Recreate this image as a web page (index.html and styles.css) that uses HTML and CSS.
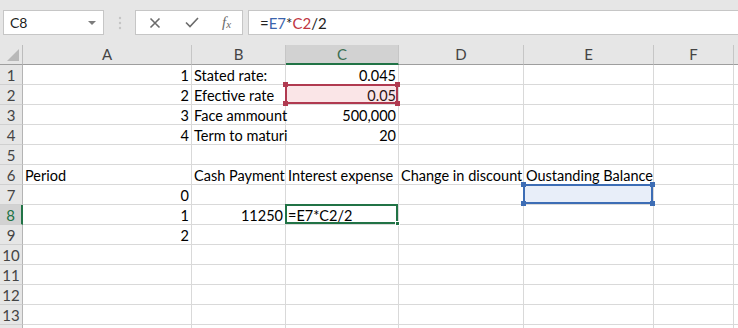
FILE: index.html
```html
<!DOCTYPE html>
<html lang="en">
<head>
  <meta charset="UTF-8" />
  <title>Book1 - Excel</title>
  <link rel="stylesheet" href="styles.css">
</head>
<body>
  <div class="toolbar">
    <div class="name-box"><span>C8</span><span class="caret"></span></div>
    <div class="grip">
      <svg width="4" height="14" viewBox="0 0 4 14"><circle cx="2" cy="2" r="1.2"/><circle cx="2" cy="7" r="1.2"/><circle cx="2" cy="12" r="1.2"/></svg>
    </div>
    <div class="fx-buttons">
      <svg class="btn-cancel" width="12" height="12" viewBox="0 0 12 12"><path d="M1.5 1.5 L10.5 10.5 M10.5 1.5 L1.5 10.5"/></svg>
      <svg class="btn-enter" width="14" height="11" viewBox="0 0 14 11"><path d="M1 5.5 L5 9.5 L13 1"/></svg>
      <span class="fx">f<sub>x</sub></span>
    </div>
    <div class="formula">=<span class="ref-blue">E7</span>*<span class="ref-red">C2</span>/2</div>
  </div>

  <div class="sheet" id="sheet"></div>

<script>
const cols = ["A", "B", "C", "D", "E", "F", ""];

// cell contents: [text, "num" for right aligned]
const data = {
  1: { A: ["1", "num"], B: ["Stated rate:"], C: ["0.045", "num"] },
  2: { A: ["2", "num"], B: ["Efective rate"], C: ["0.05", "num"] },
  3: { A: ["3", "num"], B: ["Face ammount"], C: ["500,000", "num"] },
  4: { A: ["4", "num"], B: ["Term to maturi"], C: ["20", "num"] },
  6: { A: ["Period"], B: ["Cash Payment"], C: ["Interest expense"], D: ["Change in discount"], E: ["Oustanding Balance"] },
  7: { A: ["0", "num"] },
  8: { A: ["1", "num"], B: ["11250", "num"], C: ["=E7*C2/2"] },
  9: { A: ["2", "num"] }
};

const marks = { "C2": "copy", "E7": "ref", "C8": "active" };

const sheet = document.getElementById("sheet");

function cell(cls, text) {
  const el = document.createElement("div");
  el.className = cls;
  if (text) el.textContent = text;
  sheet.appendChild(el);
  return el;
}

cell("corner");
cols.forEach(c => cell(c === "C" ? "col-head current" : "col-head", c));

for (let r = 1; r <= 14; r++) {
  cell(r === 8 ? "row-head current" : "row-head", r < 14 ? String(r) : "");
  cols.forEach(c => {
    const val = (data[r] || {})[c];
    const el = cell(val && val[1] === "num" ? "cell num" : "cell", val ? val[0] : "");
    const mark = marks[c + r];
    if (mark) {
      const box = document.createElement("div");
      box.className = "sel " + mark;
      if (mark === "active") {
        box.innerHTML = '<i class="h br"></i>';
      } else {
        box.innerHTML = '<i class="h tl"></i><i class="h tr"></i><i class="h bl"></i><i class="h br"></i>';
      }
      el.appendChild(box);
    }
  });
}
</script>
</body>
</html>
```

FILE: styles.css
```css
body {
  margin: 0; width: 738px; height: 328px; overflow: hidden;
  font-family: Lato, "Liberation Sans", sans-serif; font-size: 14px; color: #000; background: #fff;
}

/* formula bar */
.toolbar {
  display: flex; height: 45px; box-sizing: border-box;
  padding: 10px 0 10px 3px; background: #e6e6e6;
}
.name-box {
  width: 101px; box-sizing: border-box; border: 1px solid #c6c6c6; background: #fff;
  display: flex; align-items: center; justify-content: space-between; padding: 0 7px 0 6px;
  color: #222;
}
.caret {
  border-left: 4px solid transparent; border-right: 4px solid transparent;
  border-top: 4px solid #7c7c7c; margin-top: 1px;
}
.grip { width: 31px; display: flex; justify-content: center; align-items: center; }
.grip svg { fill: #c4c4c4; }
.fx-buttons {
  width: 108px; box-sizing: border-box; border: 1px solid #c6c6c6; background: #fff;
  display: flex; align-items: center; padding-left: 13px; gap: 24px;
}
.fx-buttons svg { fill: none; stroke: #6b6b6b; stroke-width: 1.6; }
.fx {
  font-family: "Liberation Serif", "Times New Roman", serif; font-style: italic;
  color: #6b6b6b; font-size: 15px; margin-left: -1px;
}
.fx sub { font-size: 11px; vertical-align: -1px; }
.formula {
  flex: 1; margin-left: 5px; background: #fff; box-sizing: border-box;
  border: 1px solid #c6c6c6; border-right: none;
  display: flex; align-items: center; padding-left: 11px; color: #222; font-size: 15px;
}
.ref-blue { color: #3b64ad; }
.ref-red { color: #c0363f; }

/* grid */
.sheet {
  display: grid; height: 283px; overflow: hidden;
  grid-template-columns: 23px 169px 94px 113px 125px 130px 80px 1fr;
  grid-auto-rows: 20px;
}
.corner, .col-head, .row-head, .cell {
  box-sizing: border-box; height: 20px; white-space: nowrap;
}
.corner {
  background: #e6e6e6; border-right: 1px solid #bcbcbc; border-bottom: 1px solid #9e9e9e;
  position: relative;
}
.corner::after {
  content: ""; position: absolute; right: 3px; bottom: 3px;
  border-left: 12px solid transparent; border-bottom: 12px solid #b8b8b8;
}
.col-head {
  background: #e6e6e6; color: #444; text-align: center; line-height: 19px; font-size: 15px;
  border-right: 1px solid #c6c6c6; border-bottom: 1px solid #9e9e9e;
}
.col-head.current { background: #d2d2d2; color: #3d6f52; border-bottom: 2px solid #217346; line-height: 18px; }
.row-head {
  background: #e6e6e6; color: #444; text-align: center; line-height: 18px; padding-top: 1px; font-size: 15px;
  border-right: 1px solid #b4b4b4; border-bottom: 1px solid #d0d0d0;
}
.row-head.current { background: #d2d2d2; color: #217346; border-right: 2px solid #217346; }
.cell {
  position: relative; padding: 2px 2px 0 2px; line-height: 17px; font-size: 14.5px;
  border-right: 1px solid #d9d9d9; border-bottom: 1px solid #d9d9d9;
}
.cell.num { text-align: right; }

/* selections */
.sel { position: absolute; z-index: 1; left: -1px; top: -1px; right: 0; bottom: 0; border: 2px solid; }
.sel .h { position: absolute; width: 5px; height: 5px; }
.h.tl { left: -4px; top: -4px; }
.h.tr { right: -4px; top: -4px; }
.h.bl { left: -4px; bottom: -4px; }
.h.br { right: -4px; bottom: -4px; }
.sel.copy { border-color: #b03a50; background: rgba(230, 110, 120, 0.18); }
.sel.copy .h { background: #b03a50; }
.sel.ref { border-color: #3d6db5; background: rgba(110, 150, 215, 0.16); }
.sel.ref .h { background: #3d6db5; }
.sel.active { border-color: #217346; }
.sel.active .h { background: #217346; border: 1px solid #fff; width: 3px; height: 3px; right: -4px; bottom: -4px; }
```
